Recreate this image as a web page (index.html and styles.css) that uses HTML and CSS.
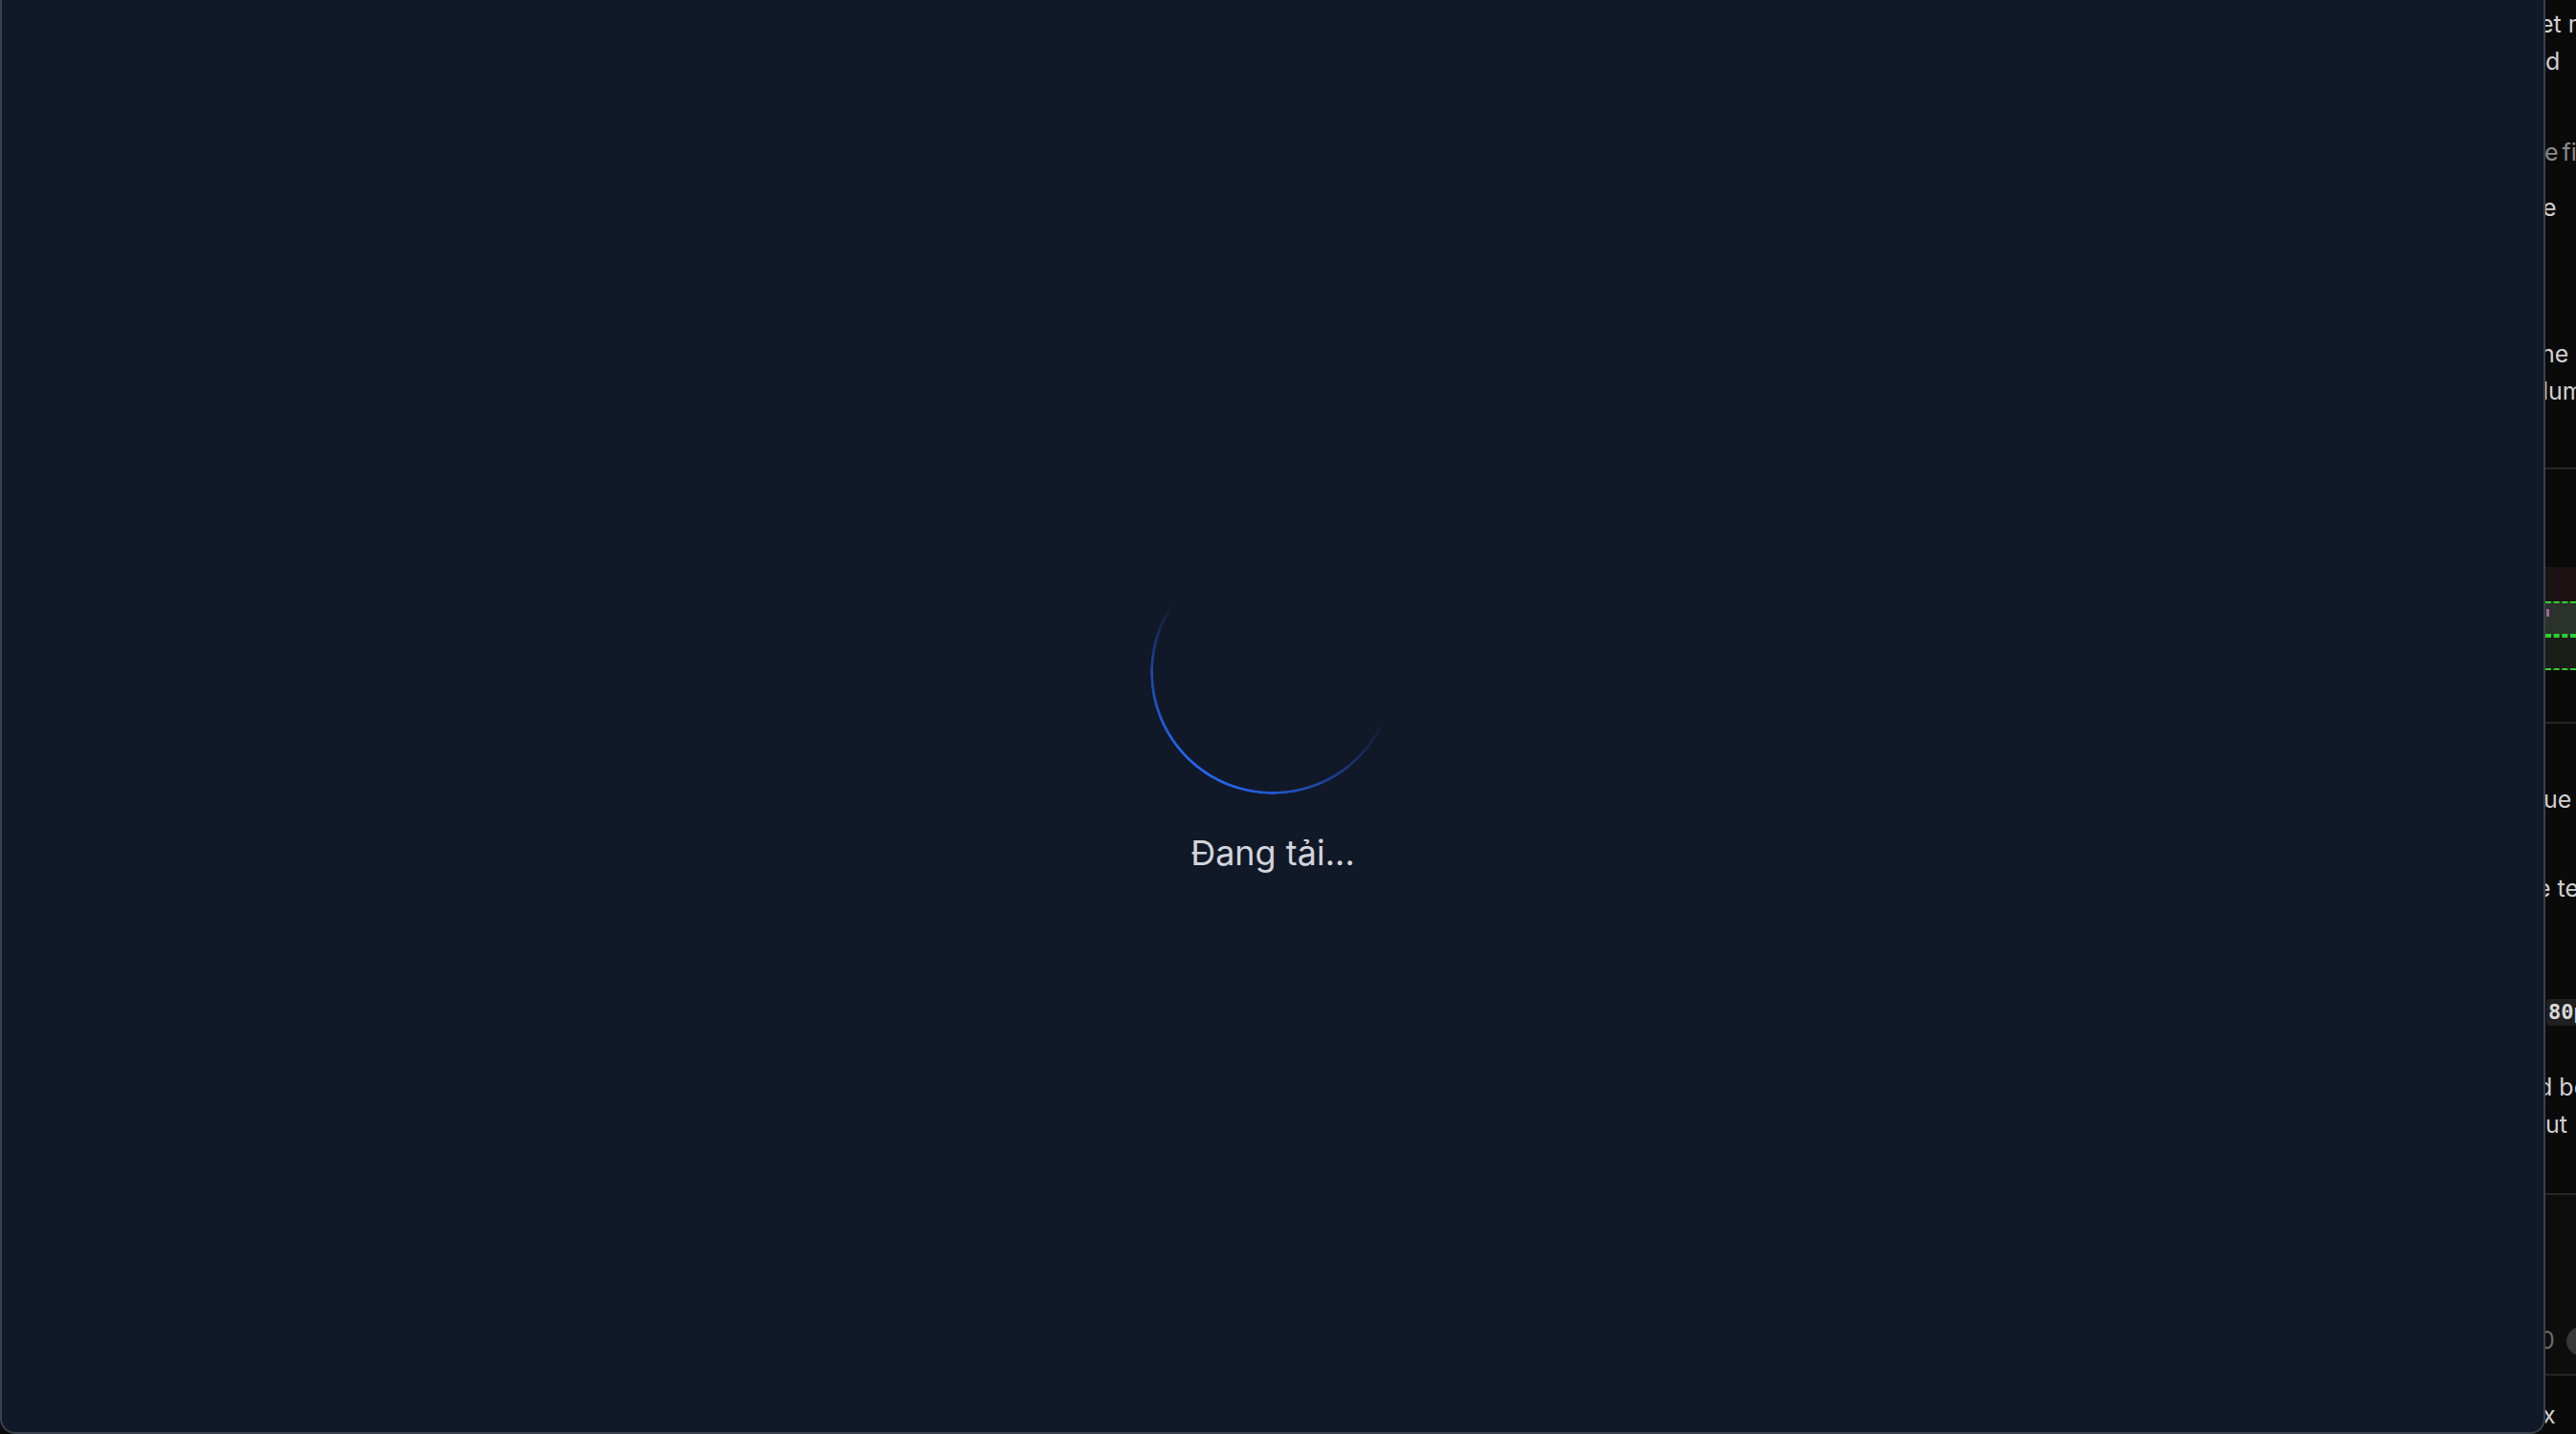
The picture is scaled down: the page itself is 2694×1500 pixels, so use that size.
FILE: index.html
```html
<!DOCTYPE html>
<html lang="vi">
<head>
<meta charset="utf-8">
<title>Đang tải...</title>
<link rel="stylesheet" href="styles.css">
</head>
<body>
  <div class="page">
    <div class="page-hidden"></div>
    <div class="doc">
      <p class="txt p1"><span class="in-6">et more</span><br><span>d</span></p>
      <p class="txt dim p2"><span class="in-1">e file</span></p>
      <p class="txt p3"><span class="in-3">e</span></p>
      <p class="txt p4"><span class="in-5">he</span><br><span class="in-3">lumn</span></p>
      <hr class="rule r1">
      <div class="diagram">
        <div class="band"></div>
        <div class="dbox box-a"><span class="mark"></span></div>
        <div class="dbox box-b"></div>
      </div>
      <hr class="rule r2">
      <p class="txt p5"><span class="in-2">ue</span></p>
      <p class="txt p6"><span class="in-9">e te</span></p>
      <div class="code-row"><code class="code">80px</code></div>
      <p class="txt p7"><span class="in-8">d be</span><br><span>ut</span></p>
      <div class="footer">
        <div class="footer-row">
          <span class="num">0</span>
          <span class="knob"></span>
        </div>
      </div>
      <p class="txt p8"><span class="in-3">x</span></p>
    </div>
  </div>

  <div class="panel">
    <div class="loader">
      <div class="spinner"></div>
      <p class="loading-text">Đang tải...</p>
    </div>
  </div>
</body>
</html>
```

FILE: styles.css
```css
* { box-sizing: border-box; }

html, body {
  margin: 0;
  padding: 0;
  width: 2694px;
  height: 1500px;
  overflow: hidden;
  background: #0a0a0a;
}

/* ---------- page behind the panel ---------- */
.page {
  display: flex;
  width: 2694px;
  height: 1500px;
}

.page-hidden {
  flex: 0 0 2662px;
}

.doc {
  flex: 1 1 auto;
  min-width: 0;
  overflow: hidden;
  display: flex;
  flex-direction: column;
  font-family: Inter, "Noto Sans", sans-serif;
  font-size: 25px;
  line-height: 39px;
  color: #d0d0d0;
  white-space: nowrap;
}

.txt { margin: 0; }
.txt span { display: inline-block; }
.dim { color: #8a8a8a; }

.in-1 { margin-left: -1px; word-spacing: -3px; }
.in-2 { margin-left: -2px; }
.in-3 { margin-left: -3px; }
.in-5 { margin-left: -5px; }
.in-6 { margin-left: -6px; }
.in-8 { margin-left: -8px; }
.in-9 { margin-left: -9px; }

.p1 { margin-top: 6px; }
.p2 { margin-top: 56px; }
.p3 { margin-top: 19px; }
.p4 { margin-top: 114px; }

.rule {
  margin: 0;
  border: 0;
  height: 2px;
  background: #262626;
  flex: none;
}
.r1 { margin-top: 60px; }

.diagram {
  margin-top: 102px;
  display: flex;
  flex-direction: column;
}
.band {
  height: 36px;
  background: #1c1214;
}
.dbox {
  position: relative;
  height: 36px;
  border-top: 2px dashed #2fcf2f;
  border-bottom: 2px dashed #2fcf2f;
}
.box-a { background: #2b322c; }
.box-b { background: #1b1d18; }
.mark {
  position: absolute;
  left: 1px;
  top: 6px;
  width: 3px;
  height: 8px;
  background: #a2629c;
}

.r2 { margin-top: 54px; }

.p5 { margin-top: 60px; }
.p6 { margin-top: 54px; }

.code-row {
  margin-top: 96px;
  display: flex;
}
.code {
  display: inline-block;
  height: 28px;
  line-height: 28px;
  padding: 0 2px;
  margin-left: 1px;
  background: #1f1f1f;
  border-radius: 4px;
  font-family: "DejaVu Sans Mono", "Liberation Mono", monospace;
  font-weight: 700;
  font-size: 22px;
  color: #d8d8d8;
}

.p7 { margin-top: 45px; }

.footer {
  margin-top: 52px;
  height: 192px;
  border-top: 2px solid #262626;
  border-bottom: 2px solid #262626;
  background: #0d0d0d;
  display: flex;
  flex-direction: column;
  justify-content: flex-end;
  padding-bottom: 15px;
}
.footer-row {
  display: flex;
  align-items: center;
  gap: 12px;
}
.num {
  margin-left: -6px;
  color: #6a6a6a;
  font-size: 25px;
}
.knob {
  flex: none;
  width: 30px;
  height: 30px;
  border-radius: 50%;
  background: #363636;
}

.p8 { margin-top: 22px; }

/* ---------- loading panel (overlay) ---------- */
.panel {
  position: fixed;
  left: 0;
  top: 0;
  width: 2662px;
  height: 1500px;
  background: #111827;
  border: 2px solid #3a404c;
  border-top: 0;
  border-radius: 0 0 16px 16px;
  display: flex;
  align-items: center;
  justify-content: center;
}

.loader {
  display: flex;
  flex-direction: column;
  align-items: center;
  gap: 34px;
  padding-bottom: 4px;
}

.spinner {
  width: 256px;
  height: 256px;
  border-radius: 50%;
  background: conic-gradient(
    rgba(37, 99, 235, 0) 0deg,
    rgba(37, 99, 235, 0) 112deg,
    rgba(37, 99, 235, 0.3) 135deg,
    rgba(37, 99, 235, 0.75) 168deg,
    #2563eb 200deg,
    #2563eb 232deg,
    rgba(37, 99, 235, 0.6) 272deg,
    rgba(37, 99, 235, 0) 305deg,
    rgba(37, 99, 235, 0) 360deg
  );
  -webkit-mask: radial-gradient(farthest-side, transparent calc(100% - 3.5px), #000 calc(100% - 2.5px));
  mask: radial-gradient(farthest-side, transparent calc(100% - 3.5px), #000 calc(100% - 2.5px));
}

.loading-text {
  margin: 0;
  font-family: Inter, "Noto Sans", sans-serif;
  font-size: 36px;
  line-height: 54px;
  color: #d1d5db;
}
```
